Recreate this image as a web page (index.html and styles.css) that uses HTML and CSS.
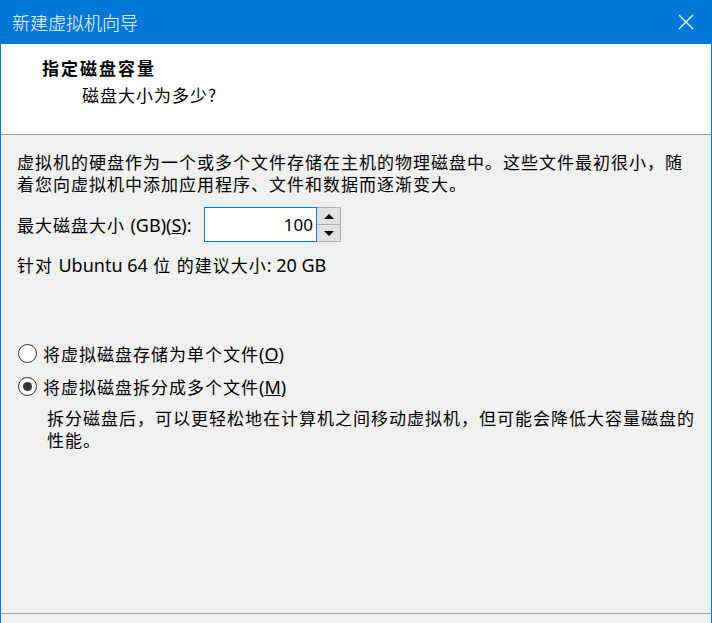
FILE: index.html
```html
<!DOCTYPE html>
<html lang="zh-CN">
<head>
    <meta charset="UTF-8">
    <meta name="viewport" content="width=device-width, initial-scale=1.0">
    <title>新建虚拟机向导</title>
    <link rel="stylesheet" href="styles.css">
</head>
<body>
    <div id="wizard">
        <div class="titlebar">
            <span class="title">新建虚拟机向导</span>
            <svg class="close" width="16" height="16" viewBox="0 0 16 16">
                <path d="M1 1 L15 15 M15 1 L1 15" stroke="#ffffff" stroke-width="1.2" fill="none"/>
            </svg>
        </div>

        <div class="header">
            <div class="head-title">指定磁盘容量</div>
            <div class="head-sub">磁盘大小为多少?</div>
        </div>

        <div class="content">
            <p class="intro">虚拟机的硬盘作为一个或多个文件存储在主机的物理磁盘中。这些文件最初很小，随<br>着您向虚拟机中添加应用程序、文件和数据而逐渐变大。</p>

            <div class="size-row">
                <label for="diskSize">最大磁盘大小 <span class="latin">(GB)(<u>S</u>):</span></label>
                <div class="spin">
                    <input type="text" id="diskSize" value="100">
                    <div class="spin-buttons">
                        <button class="spin-btn"><span class="arrow-up"></span></button>
                        <button class="spin-btn"><span class="arrow-down"></span></button>
                    </div>
                </div>
            </div>

            <p class="hint">针对 <span class="latin">Ubuntu 64</span> 位 的建议大小<span class="latin">: 20 GB</span></p>

            <div class="options">
                <label class="radio">
                    <span class="radio-mark"></span>
                    <span>将虚拟磁盘存储为单个文件<span class="latin">(<u>O</u>)</span></span>
                </label>
                <label class="radio checked">
                    <span class="radio-mark"></span>
                    <span>将虚拟磁盘拆分成多个文件<span class="latin">(<u>M</u>)</span></span>
                </label>
                <p class="desc">拆分磁盘后，可以更轻松地在计算机之间移动虚拟机，但可能会降低大容量磁盘的<br>性能。</p>
            </div>
        </div>

        <div class="footer"></div>
    </div>
</body>
</html>
```

FILE: styles.css
```css
body {
    margin: 0;
    padding: 0;
    font-family: "Noto Sans", "Noto Sans CJK SC", sans-serif;
    background-color: #f0f0f0;
    color: #000000;
}

#wizard {
    width: 712px;
    height: 623px;
    box-sizing: border-box;
    border-left: 1px solid #0078d7;
    border-right: 1px solid #0078d7;
    display: flex;
    flex-direction: column;
    background-color: #f0f0f0;
}

.titlebar {
    height: 44px;
    margin: 0 -1px;
    background-color: #0078d7;
    display: flex;
    align-items: center;
    justify-content: space-between;
    padding: 0 18px 0 12px;
}

.titlebar .title {
    color: #ffffff;
    font-family: "Noto Sans CJK SC", sans-serif;
    font-size: 18px;
    font-weight: 300;
}

.close {
    display: block;
}

.header {
    background-color: #ffffff;
    height: 91px;
    border-bottom: 1px solid #a0a0a0;
    padding: 0 0 0 41px;
    box-sizing: border-box;
    font-family: "Noto Sans CJK SC", serif;
}

.head-title {
    margin-top: 12px;
    font-size: 17px;
    font-weight: bold;
    letter-spacing: 2px;
    line-height: 24px;
}

.head-sub {
    margin: 3px 0 0 40px;
    font-size: 17px;
    letter-spacing: 1px;
    line-height: 24px;
}

.content {
    flex: 1;
    padding: 17px 0 0 16px;
    font-size: 17px;
}

.content p {
    margin: 0;
}

.latin {
    letter-spacing: 0;
    font-size: 18px;
}

.intro {
    line-height: 22px;
    letter-spacing: 1px;
}

.size-row {
    display: flex;
    align-items: center;
    margin-top: 11px;
    letter-spacing: 1px;
}

.size-row label {
    width: 187px;
}

.spin {
    display: flex;
    height: 35px;
}

.spin input {
    width: 113px;
    height: 35px;
    box-sizing: border-box;
    border: 1px solid #0078d7;
    padding: 0 3px 0 0;
    text-align: right;
    font-family: "Noto Sans", sans-serif;
    font-size: 17px;
    outline: none;
    background-color: #ffffff;
}

.spin-buttons {
    display: flex;
    flex-direction: column;
    width: 24px;
    border: 1px solid #adadad;
    border-left: none;
    box-sizing: border-box;
}

.spin-btn {
    flex: 1;
    padding: 0;
    margin: 0;
    border: none;
    background-color: #e1e1e1;
    display: flex;
    align-items: center;
    justify-content: center;
}

.spin-btn + .spin-btn {
    border-top: 1px solid #adadad;
}

.arrow-up {
    width: 0;
    height: 0;
    border-left: 5px solid transparent;
    border-right: 5px solid transparent;
    border-bottom: 5px solid #000000;
}

.arrow-down {
    width: 0;
    height: 0;
    border-left: 5px solid transparent;
    border-right: 5px solid transparent;
    border-top: 5px solid #000000;
}

.hint {
    margin-top: 12px !important;
    line-height: 22px;
    letter-spacing: 1px;
}

.options {
    margin-top: 65px;
    letter-spacing: 1px;
}

.radio {
    display: flex;
    align-items: center;
    height: 22px;
    margin-bottom: 11px;
}

.radio-mark {
    width: 19px;
    height: 19px;
    box-sizing: border-box;
    border: 1px solid #333333;
    border-radius: 50%;
    background-color: #ffffff;
    margin: 0 6px 0 1px;
    display: flex;
    align-items: center;
    justify-content: center;
}

.radio.checked .radio-mark::after {
    content: "";
    width: 9px;
    height: 9px;
    border-radius: 50%;
    background-color: #333333;
}

.desc {
    margin-left: 30px !important;
    margin-top: 1px !important;
    line-height: 22px;
}

.footer {
    height: 9px;
    border-top: 1px solid #a0a0a0;
}
```
